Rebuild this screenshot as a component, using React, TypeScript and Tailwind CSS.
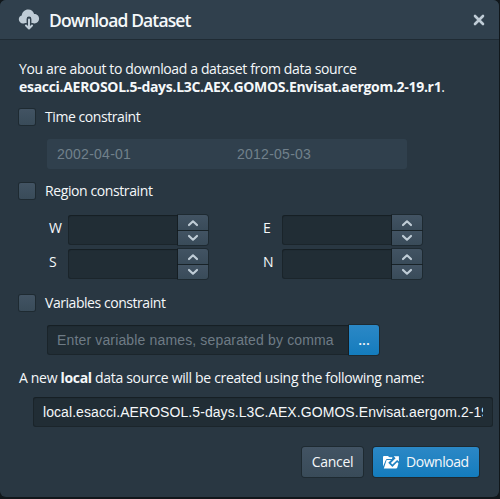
import React from "react";

const raised =
  "bg-linear-to-b from-[#425363] to-[#394b59] shadow-[0_0_0_1px_rgba(16,22,26,0.4)]";
const primary =
  "bg-linear-to-b from-[#2b88c6] to-[#137cbd] shadow-[0_0_0_1px_rgba(16,22,26,0.4)]";
const field =
  "h-[30px] bg-[#212d35] shadow-[inset_0_0_0_1px_rgba(16,22,26,0.35),inset_0_1px_1px_rgba(16,22,26,0.4)]";

function Check({ label, tracking }: { label: string; tracking: string }) {
  return (
    <label className="flex h-[18px] items-center">
      <span className={`mr-[10px] block size-4 rounded-[2px] ${raised}`} />
      <span className={`whitespace-nowrap ${tracking}`}>{label}</span>
    </label>
  );
}

function Chevron({ down }: { down?: boolean }) {
  return (
    <svg width="12" height="8" viewBox="0 0 12 8" fill="none" stroke="#bfccd6" strokeWidth="2.2" strokeLinecap="round" strokeLinejoin="round">
      <path d={down ? "M2 2l4 3.7L10 2" : "M2 6l4-3.7L10 6"} />
    </svg>
  );
}

function NumberField({ label }: { label: string }) {
  return (
    <div className="flex h-[30px]">
      <span className="mt-[4px] w-[19px] leading-[18px]">{label}</span>
      <div className={`w-[110px] rounded-l-[3px] ${field}`} />
      <div className="flex w-[30px] flex-col gap-px">
        <button className={`flex h-[15px] items-center justify-center rounded-tr-[3px] ${raised}`}>
          <Chevron />
        </button>
        <button className={`flex h-[14px] items-center justify-center rounded-br-[3px] ${raised}`}>
          <Chevron down />
        </button>
      </div>
    </div>
  );
}

export default function App() {
  return (
    <div className="h-[499px] w-[500px] overflow-hidden bg-[#11171b] font-['Open_Sans','Noto_Sans',sans-serif] text-[14px] leading-[18px] text-[#f5f8fa]">
      <div className="h-[497px] w-[499px] overflow-hidden rounded-[6px] bg-[#293742]">
        <header className="flex h-10 items-center border-b border-[#1f2b34] bg-[#30404d] pr-[14px] pl-[18px]">
          <svg width="22" height="22" viewBox="0 0 22 22">
            <path d="M5 14.500A4.200 4.200 0 0 1 .8 10.300c0-1.900 1.200-3.300 2.900-3.800C4.200 3 6.800.500 10.200.500c3.100 0 5.300 2 5.900 4.600 2.900 0 5 2 5 4.700s-2 4.700-4.700 4.700Z" fill="#bfccd6" />
            <path d="M11 10v8.500M7.800 16.600l3.200 2.700 3.200-2.700" fill="none" stroke="#30404d" strokeWidth="4.800" strokeLinecap="round" strokeLinejoin="round" />
            <path d="M11 10.600v8.500M8 16.500l3 3 3-3" fill="none" stroke="#bfccd6" strokeWidth="2" strokeLinecap="round" strokeLinejoin="round" />
          </svg>
          <h4 className="ml-[9px] flex-1 text-[17.5px] leading-[22px] font-semibold tracking-[-0.88px] whitespace-nowrap">Download Dataset</h4>
          <svg width="12" height="12" viewBox="0 0 12 12" stroke="#bfccd6" strokeWidth="2.6" strokeLinecap="round">
            <path d="M2 2l8 8M10 2l-8 8" />
          </svg>
        </header>

        <main className="pt-[20px] pl-[19px]">
          <p className="tracking-[-0.37px] whitespace-nowrap">You are about to download a dataset from data source</p>
          <p className="tracking-[-0.3px] whitespace-nowrap"><b>esacci.AEROSOL.5-days.L3C.AEX.GOMOS.Envisat.aergom.2-19.r1</b>.</p>

          <div className="mt-3">
            <Check label="Time constraint" tracking="tracking-[-0.43px]" />
            <div className="mt-[13px] ml-[28px] flex h-[30px] w-[360px] items-center rounded-[3px] bg-[#30404d] px-[10px] font-['Liberation_Sans',Arial,sans-serif] tracking-[0.25px] text-[#71808b]">
              <span className="w-[180px]">2002-04-01</span>
              <span>2012-05-03</span>
            </div>
          </div>

          <div className="mt-[13px]">
            <Check label="Region constraint" tracking="tracking-[-0.4px]" />
            <div className="mt-[15px] ml-[30px] grid grid-cols-[214px_160px] gap-y-1">
              <NumberField label="W" />
              <NumberField label="E" />
              <NumberField label="S" />
              <NumberField label="N" />
            </div>
          </div>

          <div className="mt-[15px]">
            <Check label="Variables constraint" tracking="tracking-[-0.45px]" />
            <div className="mt-[13px] ml-[28px] flex">
              <div className={`flex w-[302px] items-center rounded-l-[3px] pl-[10px] font-['Liberation_Sans',Arial,sans-serif] tracking-[0.15px] whitespace-nowrap text-[#6e7b85] ${field}`}>
                Enter variable names, separated by comma
              </div>
              <button className={`h-[30px] w-[30px] rounded-r-[3px] font-semibold ${primary}`}>...</button>
            </div>
          </div>

          <p className="mt-[14px] tracking-[-0.32px] whitespace-nowrap">A new <b>local</b> data source will be created using the following name:</p>
          <div className={`mt-[10px] ml-[14px] flex w-[460px] items-center rounded-[3px] px-[10px] font-['Liberation_Sans',Arial,sans-serif] tracking-[0.07px] ${field}`}>
            <span className="w-full overflow-hidden whitespace-nowrap">local.esacci.AEROSOL.5-days.L3C.AEX.GOMOS.Envisat.aergom.2-19.r1</span>
          </div>
        </main>

        <footer className="mt-[20px] flex justify-end gap-[10px] pr-[20px]">
          <button className={`h-[30px] w-[61px] rounded-[3px] tracking-[-0.3px] ${raised}`}>Cancel</button>
          <button className={`flex h-[30px] w-[106px] items-center rounded-[3px] pl-[9px] ${primary}`}>
            <svg width="18" height="16" viewBox="0 0 18 16">
              <path d="M1 12.500V3.200C1 2.500 1.500 2 2.200 2h3.600l1.800 1.300h3.400L9.800 5H5.200c-.7 0-1.200.3-1.400 1L1 12.500Z" fill="#fff" />
              <path d="M4.600 6h12.900l-2.300 7.800c-.2.5-.6.7-1.100.7H1.800L4.600 6Z" fill="#fff" />
              <path d="M17.200 1.800v6.400l-2.100-1.900-4.700 4.800-2.300-2.300 4.700-4.700-2.100-2.300Z" fill="#fff" stroke="#2182c2" strokeWidth="2.600" />
              <path d="M16.900 2.200v5.400l-1.800-1.700-4.700 4.600-1.500-1.500 4.700-4.700-1.900-2.100Z" fill="#fff" />
            </svg>
            <span className="ml-[6px] tracking-[-0.45px]">Download</span>
          </button>
        </footer>
      </div>
    </div>
  );
}
